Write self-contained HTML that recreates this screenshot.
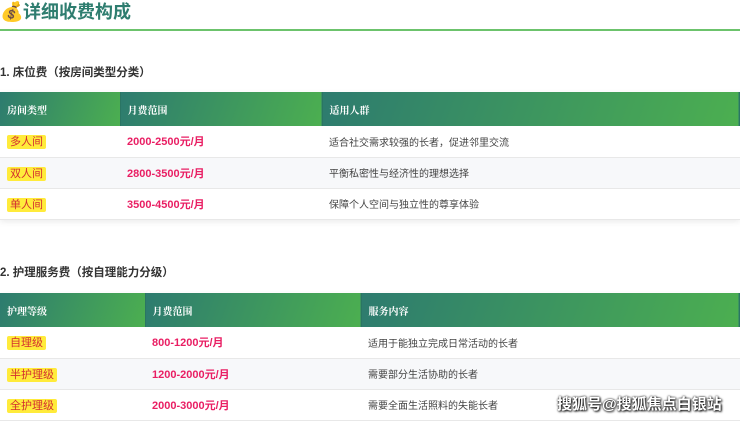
<!DOCTYPE html>
<html><head><meta charset="utf-8"><style>
*{margin:0;padding:0;box-sizing:border-box}
body{width:740px;height:417px;overflow:hidden;background:#fff;font-family:"Liberation Sans","Noto Sans CJK SC",sans-serif;position:relative}
.title{position:absolute;left:0;top:0;height:31px;width:740px;border-bottom:2px solid #6cc36c}
.title .ic{position:absolute;left:0;top:1px;font-size:19px;line-height:24px}
.title h1{position:absolute;left:23px;top:0px;font-size:18px;color:#2e7d6f;font-weight:bold;line-height:24px}
h2{position:absolute;left:0;font-size:11.5px;font-weight:bold;color:#333}
table{position:absolute;left:0;width:740px;border-collapse:collapse;font-size:10px;box-shadow:0 2px 6px rgba(0,0,0,.08)}
th{background:linear-gradient(110deg,#2d7b6f,#4caf50);color:#fff;text-align:left;font-weight:bold;padding-left:7px;height:34px;font-family:"Noto Serif CJK SC",serif;font-size:10px;border-right:1px solid #2a7563}
td{height:31px;padding-left:7px;border-bottom:1px solid #e8e8e8;color:#444}
tr:nth-child(2n+1) td{background:#f7f8fa}
.tag{background:#ffeb3b;color:#d32f2f;padding:1px 3px;border-radius:2px;font-size:11px}
.p{color:#e91e63;font-weight:bold;font-size:11px}
.wm{position:absolute;left:557px;top:393px;color:#fff;font-size:15px;font-weight:bold;text-shadow:0 0 2px #000,1px 1px 2px #000}
</style></head><body>
<div class="title"><span class="ic">💰</span><h1>详细收费构成</h1></div>
<h2 style="top:64px">1. 床位费（按房间类型分类）</h2>
<table style="top:92px">
<tr><th style="width:120px">房间类型</th><th style="width:202px">月费范围</th><th>适用人群</th></tr>
<tr><td><span class="tag">多人间</span></td><td class="p">2000-2500元/月</td><td>适合社交需求较强的长者，促进邻里交流</td></tr>
<tr><td><span class="tag">双人间</span></td><td class="p">2800-3500元/月</td><td>平衡私密性与经济性的理想选择</td></tr>
<tr><td><span class="tag">单人间</span></td><td class="p">3500-4500元/月</td><td>保障个人空间与独立性的尊享体验</td></tr>
</table>
<h2 style="top:264px">2. 护理服务费（按自理能力分级）</h2>
<table style="top:293px">
<tr><th style="width:145px">护理等级</th><th style="width:216px">月费范围</th><th>服务内容</th></tr>
<tr><td><span class="tag">自理级</span></td><td class="p">800-1200元/月</td><td>适用于能独立完成日常活动的长者</td></tr>
<tr><td><span class="tag">半护理级</span></td><td class="p">1200-2000元/月</td><td>需要部分生活协助的长者</td></tr>
<tr><td><span class="tag">全护理级</span></td><td class="p">2000-3000元/月</td><td>需要全面生活照料的失能长者</td></tr>
</table>
<div class="wm">搜狐号@搜狐焦点白银站</div>
</body></html>
